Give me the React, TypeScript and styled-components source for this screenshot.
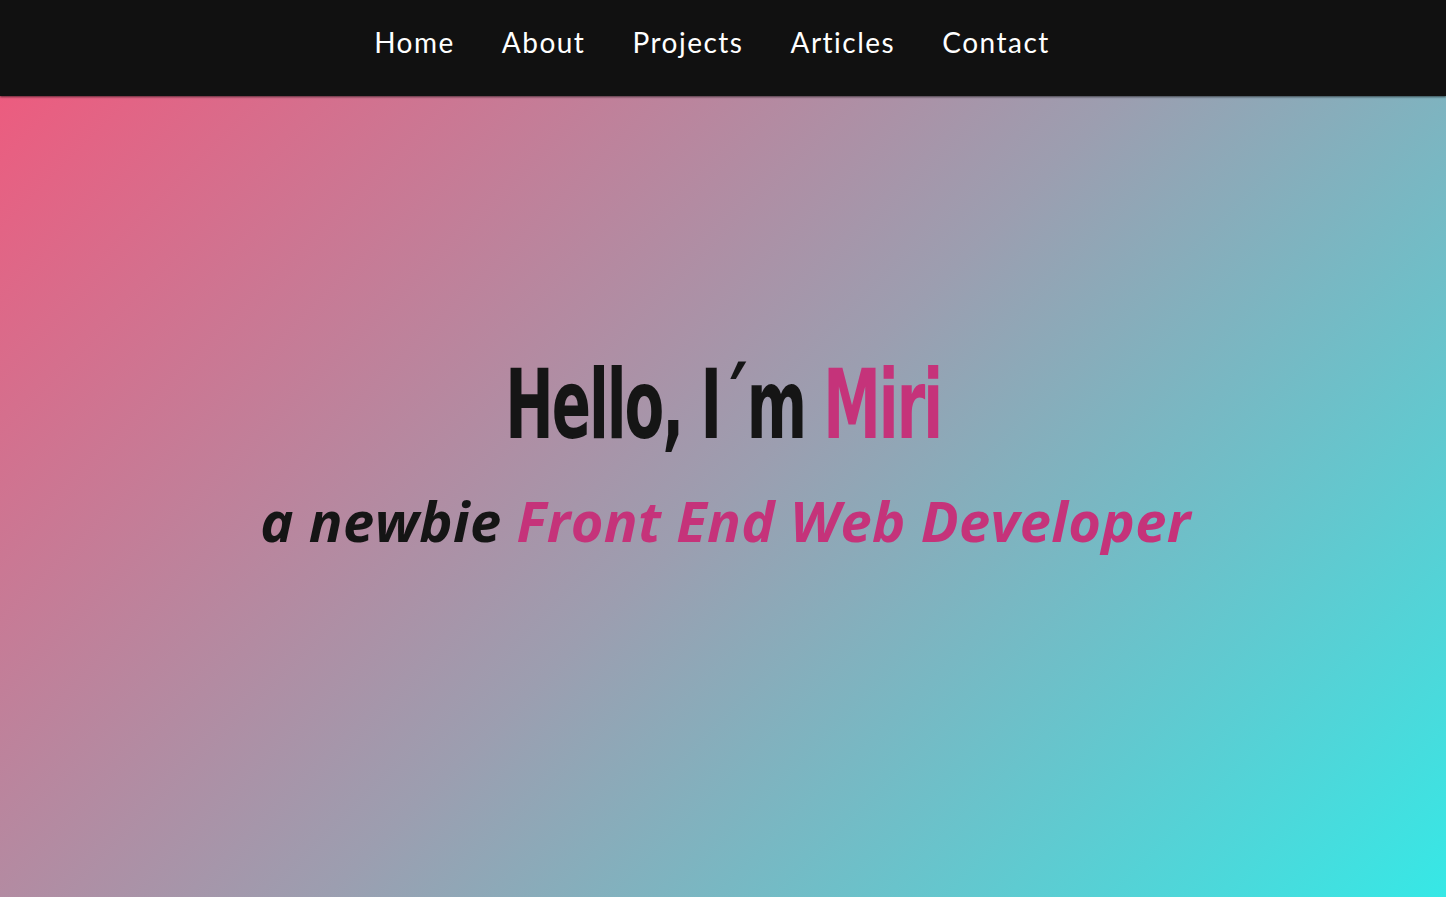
import React from "react";
import styled, { createGlobalStyle } from "styled-components";

const Global = createGlobalStyle`
  html, body { margin: 0; padding: 0; }
  body { background: #111; }
  * { box-sizing: border-box; }
`;

const Page = styled.div`
  display: flex;
  flex-direction: column;
  min-height: 897px;
`;

const NavBar = styled.nav`
  height: 96px;
  background: #111111;
  display: flex;
  justify-content: center;
  align-items: center;
  gap: 47px;
  padding-right: 22px;
  padding-bottom: 12px;
  box-shadow: 0 1px 2px rgba(0, 0, 0, 0.6);
  position: relative;
  z-index: 1;
`;

const NavLink = styled.a`
  font-family: "Lato", "Noto Sans", sans-serif;
  font-size: 28px;
  letter-spacing: 1.5px;
  color: #ffffff;
  text-decoration: none;
`;

const Hero = styled.main`
  flex: 1;
  min-height: 801px;
  background: linear-gradient(135deg, #ec5c7f 0%, #9c9eb0 50%, #36e8e6 100%);
  display: flex;
  flex-direction: column;
  align-items: center;
  padding-top: 254px;
`;

const Title = styled.h1`
  margin: 0;
  display: inline-block;
  font-family: "DejaVu Sans Condensed", "DejaVu Sans", sans-serif;
  font-weight: 700;
  font-size: 96px;
  line-height: 110px;
  color: #151515;
  letter-spacing: -3px;
  transform: scaleX(0.67);
  white-space: nowrap;
`;

const Accent = styled.span`
  color: #c5337a;
`;

const Subtitle = styled.h2`
  margin: 20px 0 0;
  font-family: "Open Sans", sans-serif;
  font-style: italic;
  font-weight: 700;
  font-size: 56px;
  line-height: 80px;
  letter-spacing: 0.4px;
  color: #151515;
  white-space: nowrap;
  padding-left: 5px;
`;

export default function App() {
  const links = ["Home", "About", "Projects", "Articles", "Contact"];
  return (
    <Page>
      <Global />
      <NavBar>
        {links.map((l) => (
          <NavLink key={l} href="#">{l}</NavLink>
        ))}
      </NavBar>
      <Hero>
        <Title>
          Hello, I´m <Accent>Miri</Accent>
        </Title>
        <Subtitle>
          a newbie <Accent>Front End Web Developer</Accent>
        </Subtitle>
      </Hero>
    </Page>
  );
}
